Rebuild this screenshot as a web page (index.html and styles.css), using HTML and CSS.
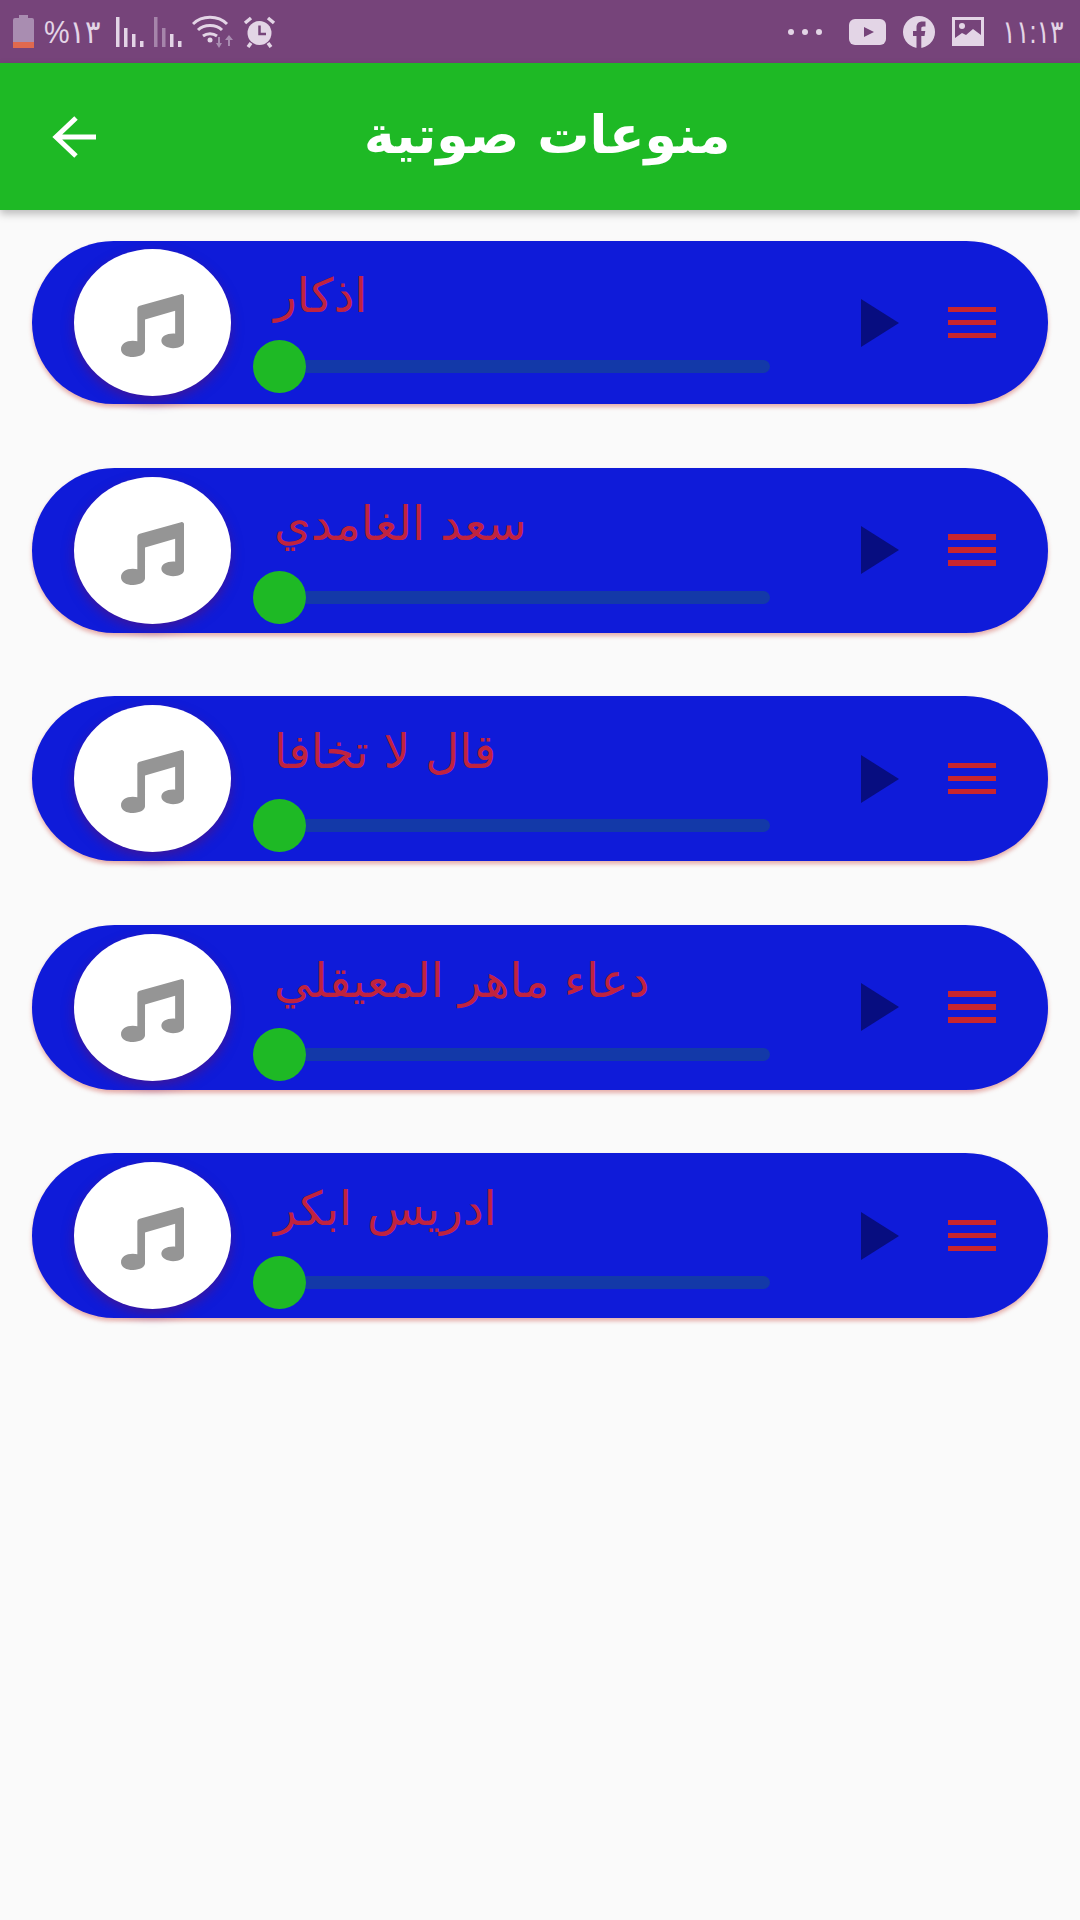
FILE: index.html
```html
<!DOCTYPE html>
<html lang="ar">
<head>
  <meta charset="UTF-8" />
  <title>منوعات صوتية</title>
  <link rel="stylesheet" href="styles.css">
</head>
<body>

<!-- Status bar -->
<div class="status-bar">
  <div class="status-left">
    <svg class="battery" width="21" height="33" viewBox="0 0 21 33">
      <path d="M6 0h9v3h4a2 2 0 0 1 2 2v28H0V5a2 2 0 0 1 2-2h4z" fill="#a98db1"/>
      <rect y="27" width="21" height="6" fill="#e0694f"/>
    </svg>
    <span class="status-text battery-text">%١٣</span>
    <svg width="28" height="30" viewBox="0 0 28 30" fill="#e3d5e6">
      <rect x="0" y="0" width="3.500" height="30"/><rect x="8" y="11" width="3.500" height="19"/><rect x="16" y="17" width="3.500" height="13"/><rect x="24" y="24" width="3.500" height="6"/>
    </svg>
    <svg width="28" height="30" viewBox="0 0 28 30" fill="#e3d5e6">
      <rect x="0" y="0" width="3.500" height="30" opacity=".45"/><rect x="8" y="11" width="3.500" height="19" opacity=".45"/><rect x="16" y="17" width="3.500" height="13"/><rect x="24" y="24" width="3.500" height="6"/>
    </svg>
    <svg width="41" height="33" viewBox="0 0 41 33" fill="none" stroke="#e3d5e6" stroke-width="3">
      <path d="M1 9c9-9 25-9 34 0M6 15c6-6 18-6 24 0M11 21c4-3 10-3 14 0"/>
      <circle cx="18" cy="25" r="2.500" fill="#e3d5e6" stroke="none"/>
      <path d="M27 22v8M37 31V21" stroke="#a98db1" stroke-width="2"/>
      <path d="M24 28l3 5 3-5zM33 25l4-5 4 5z" fill="#a98db1" stroke="none"/>
    </svg>
    <svg width="33" height="32" viewBox="0 0 33 32">
      <circle cx="16.500" cy="17" r="12" fill="#e3d5e6"/>
      <path d="M16.500 9.500v8.500h6.500" fill="none" stroke="#76447a" stroke-width="2.500"/>
      <path d="M2 7l6-5M31 7l-6-5M8 27l-3 4M25 27l3 4" stroke="#e3d5e6" stroke-width="3.500"/>
    </svg>
  </div>
  <div class="status-right">
    <div class="dots"><i></i><i></i><i></i></div>
    <svg width="37" height="26" viewBox="0 0 37 26">
      <rect width="37" height="26" rx="6" fill="#e3d5e6"/>
      <path d="M15 8l10 5-10 5z" fill="#76447a"/>
    </svg>
    <svg width="32" height="32" viewBox="0 0 32 32">
      <circle cx="16" cy="16" r="16" fill="#e3d5e6"/>
      <path d="M13.500 32V20H10v-5h3.500v-3.500c0-4 2.200-6 6-6h3v5h-2c-1.800 0-2.200.7-2.200 2V15h4l-.8 5h-3.200v12z" fill="#76447a"/>
    </svg>
    <svg width="32" height="29" viewBox="0 0 32 29">
      <rect width="32" height="29" fill="#e3d5e6"/>
      <rect x="3" y="3" width="26" height="21" fill="#76447a"/>
      <circle cx="10" cy="9" r="3" fill="#e3d5e6"/>
      <path d="M3 21l7-5 4 2 7-6 8 6v8H3z" fill="#e3d5e6"/>
    </svg>
    <span class="status-text clock">١١:١٣</span>
  </div>
</div>

<!-- App bar -->
<div class="app-bar">
  <svg class="back-icon" width="44" height="42" viewBox="0 0 44 42" fill="none" stroke="#fff" stroke-width="5">
    <path d="M44 21H4M24 2L4 21l20 19"/>
  </svg>
  <h1 class="app-title">منوعات صوتية</h1>
</div>

<!-- Tracks -->
<div class="track-list">
  <div class="track track-first">
    <div class="disc"><svg class="note" width="63" height="63" viewBox="0 0 64 64"><use href="#note-shape"/></svg></div>
    <div class="track-body">
      <div class="track-name">اذكار</div>
      <div class="slider"><div class="thumb"></div><div class="rail"></div></div>
    </div>
    <div class="play"></div>
    <div class="burger"><i></i><i></i><i></i></div>
  </div>
  <div class="track">
    <div class="disc"><svg class="note" width="63" height="63" viewBox="0 0 64 64"><use href="#note-shape"/></svg></div>
    <div class="track-body">
      <div class="track-name">سعد الغامدي</div>
      <div class="slider"><div class="thumb"></div><div class="rail"></div></div>
    </div>
    <div class="play"></div>
    <div class="burger"><i></i><i></i><i></i></div>
  </div>
  <div class="track">
    <div class="disc"><svg class="note" width="63" height="63" viewBox="0 0 64 64"><use href="#note-shape"/></svg></div>
    <div class="track-body">
      <div class="track-name">قال لا تخافا</div>
      <div class="slider"><div class="thumb"></div><div class="rail"></div></div>
    </div>
    <div class="play"></div>
    <div class="burger"><i></i><i></i><i></i></div>
  </div>
  <div class="track">
    <div class="disc"><svg class="note" width="63" height="63" viewBox="0 0 64 64"><use href="#note-shape"/></svg></div>
    <div class="track-body">
      <div class="track-name">دعاء ماهر المعيقلي</div>
      <div class="slider"><div class="thumb"></div><div class="rail"></div></div>
    </div>
    <div class="play"></div>
    <div class="burger"><i></i><i></i><i></i></div>
  </div>
  <div class="track">
    <div class="disc"><svg class="note" width="63" height="63" viewBox="0 0 64 64"><use href="#note-shape"/></svg></div>
    <div class="track-body">
      <div class="track-name">ادريس ابكر</div>
      <div class="slider"><div class="thumb"></div><div class="rail"></div></div>
    </div>
    <div class="play"></div>
    <div class="burger"><i></i><i></i><i></i></div>
  </div>
</div>

<svg width="0" height="0" class="defs">
  <defs>
    <path id="note-shape" fill="#959595" d="M16.600 15c0-1.500 1-2.600 2.400-3L61 .2c1.600-.5 3 .6 3 2.200V49c0 3.500-5 6-11 6s-12-3-12-7.500S46 40 53 40c.8 0 1.500.1 2 .3V17L24.400 26v31c0 4-5 7-12 7S0 61 0 56s5-8.500 12-8.500c1.800 0 3.300.2 4.600.6z"/>
  </defs>
</svg>

</body>
</html>
```

FILE: styles.css
```css
body {
  margin: 0;
  background: #fafafa;
  font-family: "DejaVu Sans", sans-serif;
  width: 1080px;
  height: 1920px;
  overflow: hidden;
}
.defs {
  position: absolute;
}

/* Status bar */
.status-bar {
  height: 63px;
  background: #76447a;
  display: flex;
  justify-content: space-between;
  align-items: center;
  padding: 0 13px;
}
.status-left, .status-right {
  display: flex;
  align-items: center;
  gap: 10px;
}
.status-right {
  gap: 17px;
}
.status-text {
  color: #e3d5e6;
  font-size: 32px;
  font-family: "Liberation Sans", "DejaVu Sans", sans-serif;
}
.battery-text {
  width: 62px;
  letter-spacing: -4px;
  transform: scaleX(0.9);
  transform-origin: left;
}
.clock {
  margin: 0 3px 0 -15px;
  letter-spacing: -6px;
  transform: scaleX(0.79);
  transform-origin: right;
}
.dots {
  display: flex;
  gap: 8px;
  margin-right: 10px;
}
.dots i {
  width: 6px;
  height: 6px;
  border-radius: 50%;
  background: #e3d5e6;
}

/* App bar */
.app-bar {
  height: 147px;
  background: #1eb925;
  box-shadow: 0 4px 8px rgba(0,0,0,0.25);
  display: flex;
  align-items: center;
  position: relative;
}
.back-icon {
  margin-left: 52px;
}
.app-title {
  margin: 0 0 4px 268px;
  color: #fff;
  font-size: 52px;
  font-weight: bold;
}

/* Tracks */
.track-list {
  padding: 31px 32px 0;
  display: flex;
  flex-direction: column;
  gap: 63.500px;
}
.track {
  height: 165px;
  background: #0f1bd9;
  border-radius: 83px;
  box-shadow: 0 3px 4px rgba(200,60,50,0.4);
  display: flex;
  align-items: center;
}
.track-first {
  height: 163px;
}
.disc {
  width: 157.500px;
  height: 147px;
  margin-left: 41.500px;
  border-radius: 50%;
  background: #fff;
  box-shadow: 0 5px 12px rgba(80,20,130,0.7);
  display: flex;
  align-items: center;
  justify-content: center;
}
.note {
  display: block;
  margin-top: 6px;
}
.track-body {
  width: 517px;
  margin-left: 22px;
  padding-top: 28px;
  align-self: flex-start;
}
.track-first .track-body {
  padding-top: 27px;
}
.track-name {
  color: #c0233f;
  font-size: 47px;
  line-height: 56px;
  margin-left: 21px;
  height: 75px;
  direction: rtl;
  display: flex;
  justify-content: flex-end;
}
.track-first .track-name {
  height: 72px;
}
.slider {
  display: flex;
  align-items: center;
}
.thumb {
  width: 53px;
  height: 53px;
  border-radius: 50%;
  background: #1eb925;
}
.rail {
  flex: 1;
  height: 13px;
  background: #1339a8;
  border-radius: 0 7px 7px 0;
}
.play {
  width: 0;
  height: 0;
  margin-left: 91px;
  border-left: 38px solid #070d80;
  border-top: 24px solid transparent;
  border-bottom: 24px solid transparent;
}
.burger {
  margin-left: 49px;
  width: 48px;
  display: flex;
  flex-direction: column;
  gap: 7.500px;
}
.burger i {
  height: 5.500px;
  background: #c9252e;
}
```
